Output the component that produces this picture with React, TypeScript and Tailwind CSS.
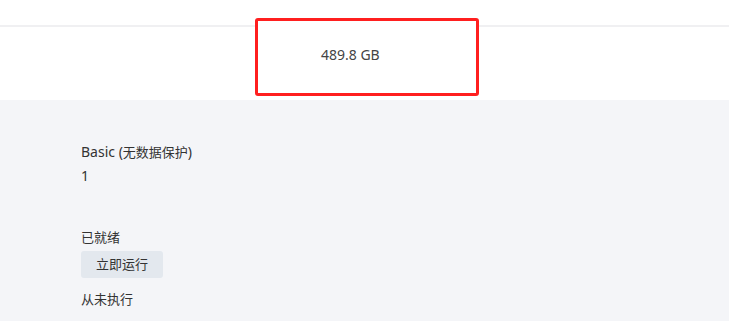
import React from 'react';

export default function App() {
  return (
    <div
      className="w-[729px] h-[321px] overflow-hidden bg-[#f4f5f8] text-[13px] text-[#333]"
      style={{ fontFamily: '"Noto Sans", "Noto Sans CJK SC", sans-serif' }}
    >
      {/* Top table area */}
      <div className="relative h-[100px] bg-white">
        <div className="h-[27px] border-b-2 border-[#f0f0f2]" />
        {/* Highlight box */}
        <div className="absolute left-[255px] top-[18px] w-[224px] h-[78px] bg-white border-[3px] border-[#ff1f1f] rounded-[3px] flex items-center">
          <span className="ml-[63px] -mt-[6px] text-[14px] text-[#444]">489.8 GB</span>
        </div>
      </div>

      {/* Details */}
      <div className="pl-[81px] pt-[42px] flex flex-col">
        <span className="leading-[20px]">
          <span className="text-[14px]">Basic (</span>无数据保护<span className="text-[14px]">)</span>
        </span>
        <span className="leading-[20px] mt-[4px] text-[14px]">1</span>
        <span className="leading-[20px] mt-[41px]">已就绪</span>
        <button className="mt-[4px] w-[82px] h-[27px] rounded-[3px] bg-[#e3e8ee] text-[#333] text-[13px]">
          立即运行
        </button>
        <span className="leading-[20px] mt-[11px]">从未执行</span>
      </div>
    </div>
  );
}
